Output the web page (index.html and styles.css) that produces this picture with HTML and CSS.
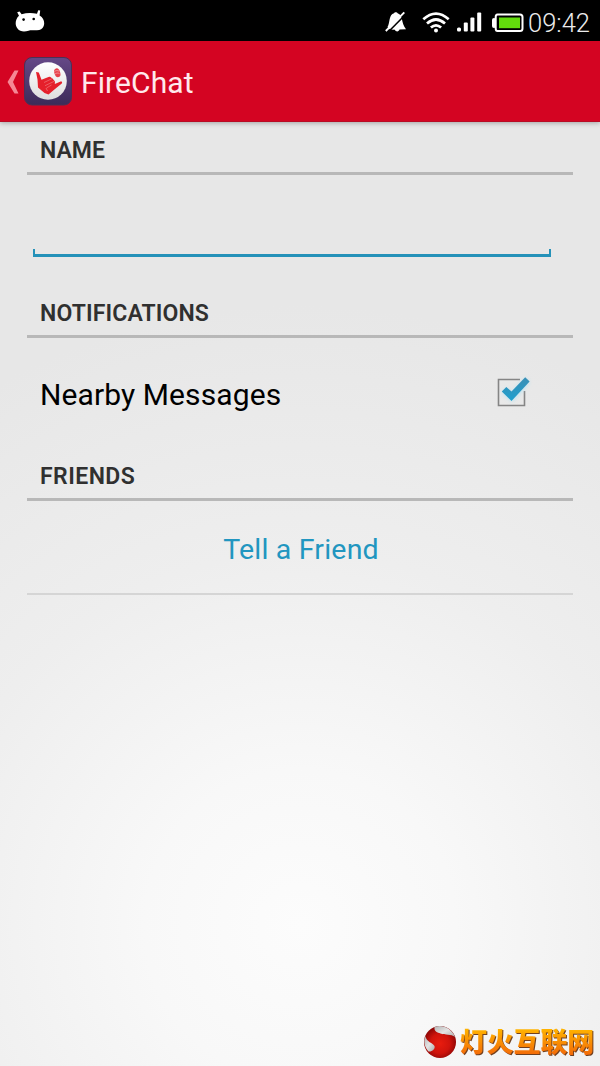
FILE: index.html
```html
<!DOCTYPE html>
<html lang="en">
<head>
<meta charset="utf-8">
<title>FireChat</title>
<link rel="stylesheet" href="styles.css">
</head>
<body>
<div class="screen">
  <header class="status">
    <svg class="droid" width="30" height="23" viewBox="0 0 30 23"><path d="M2.2 2.300 4.600 1.500l2 2.700Q14 2.200 22 3.800L23.200.2l2 .4-.6 5c4.400 2.600 5.400 7.200 4 10.600-1.200 3.200-4 4.400-8.100 4-3 .2-4.500-.4-7 .6-4 1.200-8.500 1.200-11-2.300C-.4 15.500.2 9 4 5.700Z" fill="#fff"/><circle cx="8.600" cy="9.600" r="1.300"/><circle cx="18.700" cy="9" r="1.300"/></svg>
    <div class="tray">
      <svg class="bell" width="22" height="22" viewBox="0 0 22 22"><path d="M2.500 16C5 12.500 3.800 3 9 2.300c.6-1.400 3-1.400 3.600 0C18.500 4 15.500 11 21 18.300l-6.500.3c-.5 2.400-4 2.400-4.600.1L5 18.500Z" fill="#fff"/><path d="M4 20.200 21 3" stroke="#000" stroke-width="1.600"/><path d="M.8 20 19.300 1.300" stroke="#fff" stroke-width="1.900"/></svg>
      <svg class="wifi" width="28" height="21" viewBox="0 0 28 21"><g fill="none" stroke="#fff" stroke-width="2.700"><path d="M1.300 7.300Q14-4 26.700 7.300"/><path d="M5 11.600Q14 3.400 23 11.600"/><path d="M8.900 15.600Q14 11 19.100 15.600"/></g><circle cx="14" cy="18.400" r="2" fill="#fff"/></svg>
      <svg class="signal" width="25" height="20" viewBox="0 0 25 20"><g fill="#fff"><rect y="15.500" width="4" height="4" rx="1.500"/><rect x="6.800" y="10.500" width="4" height="9" rx="1"/><rect x="13.400" y="5.500" width="4" height="14" rx="1"/><rect x="20.200" y=".5" width="4" height="19" rx="1"/></g></svg>
      <svg class="battery" width="32" height="20" viewBox="0 0 32 20"><path d="M5.500 1.500H28Q30.500 1.500 30.500 4V15.500Q30.500 18 28 18H5.500Q3.700 18 3.700 15.500V4Q3.700 1.500 5.500 1.500Z" fill="none" stroke="#fff" stroke-width="2"/><rect y="5" width="4" height="10" rx="2" fill="#fff"/><rect x="7" y="4.500" width="21" height="10.700" fill="#63dc0c"/></svg>
      <span class="clock">09:42</span>
    </div>
  </header>
  <div class="bar">
    <svg class="back" width="13" height="24" viewBox="0 0 13 24"><path d="M7.500.5h4L6 12l5.500 11.500h-4L.5 12Z" fill="#f58795"/></svg>
    <svg class="logo" width="49" height="49" viewBox="0 0 49 49">
      <defs><linearGradient id="tile" x2="0" y2="1"><stop stop-color="#654887"/><stop offset="1" stop-color="#3c2b59"/></linearGradient><linearGradient id="disc" x2="0" y2="1"><stop stop-color="#fff"/><stop offset="1" stop-color="#ddd"/></linearGradient></defs>
      <rect x=".5" y=".5" width="47" height="47.500" rx="7.500" fill="url(#tile)" stroke="#4b3156"/>
      <circle cx="24" cy="24" r="18.800" fill="url(#disc)"/>
      <path d="M12 15 14.800 15.400 17.500 22.800 24.500 19.900Q26.500 19.400 27 20.600L28.500 21.500 31 24.500 30.800 27 37.200 24.300Q38.800 25 37.800 26.600L31 32 24.500 37.500 20.500 36 14 30.500 13.500 22.500Z" fill="#e5202b"/>
      <g fill="none" stroke="#f08488" stroke-width=".6"><path d="M20 25.500l8-3.800M21 28.700l9.500-4.500M22.500 31l5-3M22 31l1.500 3"/></g>
      <ellipse cx="33.300" cy="15.800" rx="2.900" ry="4.500" transform="rotate(-18 33.300 15.800)" fill="#e5202b" opacity=".85"/>
      <path d="M30.500 14.500c1.600-1.200 3-1.200 4.700-.3M31 17c1.500-1.200 3-1.200 4.500-.4" fill="none" stroke="#fbdada" stroke-width=".5"/>
    </svg>
    <h1 class="title">FireChat</h1>
  </div>
  <main class="content">
    <section class="section">
      <h2 class="heading">NAME</h2>
      <div class="field"></div>
    </section>
    <section class="section">
      <h2 class="heading heading-notifications">NOTIFICATIONS</h2>
      <div class="option">
        <span class="label">Nearby Messages</span>
        <svg class="check" width="40" height="38" viewBox="0 0 40 38"><defs><filter id="glow" x="-30%" y="-30%" width="160%" height="160%"><feGaussianBlur stdDeviation="2.200"/></filter><linearGradient id="tick" x2="0" y2="1"><stop stop-color="#3a8fb5"/><stop offset="1" stop-color="#1f9fce"/></linearGradient></defs><path d="M28 5.500H6.500V31.500H32.500V17" fill="none" stroke="#858585" stroke-width="1.600"/><path d="M10.500 18.500 14.500 14.500 20 19.500 33 4.500 37 8 20 27Z" fill="#a5e0f5" filter="url(#glow)"/><path d="M9.800 17.500 14.300 13 19.500 17.500 33.200 3.200 37.600 7.500 19.500 27Z" fill="url(#tick)"/></svg>
      </div>
    </section>
    <section class="section">
      <h2 class="heading heading-friends">FRIENDS</h2>
      <div class="tell"><a class="link">Tell a Friend</a></div>
    </section>
  </main>
  <div class="mark">
    <svg class="orb" width="34" height="34" viewBox="0 0 34 34"><defs><radialGradient id="ball" cx=".5" cy=".55" r=".55"><stop stop-color="#e81c0e"/><stop offset=".55" stop-color="#d0140c"/><stop offset="1" stop-color="#860505"/></radialGradient><linearGradient id="steel" x2="1" y2="1"><stop stop-color="#b5b5b5"/><stop offset=".5" stop-color="#e4e4e4"/><stop offset="1" stop-color="#aaa"/></linearGradient></defs><circle cx="17" cy="17" r="16" fill="url(#ball)"/><path d="M11.500 2C20-1 29 4 32 12 28 8.500 22 10.500 17.500 8.500 14 7 11 6.500 11.500 2Z" fill="url(#steel)"/><path d="M2.200 11C.3 17 1.500 22 5.500 26.500 9 27 12.500 24 11.500 21 10 18 3.500 17 2.200 11Z" fill="url(#steel)"/></svg>
    <span class="mark-text">灯火互联网</span>
  </div>
</div>
</body>
</html>
```
FILE: styles.css
```css
body { margin: 0; }
.screen {
  position: relative;
  width: 600px;
  height: 1066px;
  overflow: hidden;
  font-family: Roboto, "Liberation Sans", sans-serif;
  background: radial-gradient(circle 620px at 300px 925px, #fcfcfc 0%, #f8f8f8 25%, #eeeeee 60%, #e7e7e7 100%);
}
.status {
  height: 41px;
  box-sizing: border-box;
  display: flex;
  justify-content: space-between;
  align-items: flex-start;
  padding: 10px 8px 0 15px;
  background: #000;
}
.tray { display: flex; align-items: flex-start; }
.bell { margin: 1px 15px 0 0; }
.wifi { margin: 2px 7px 0 0; }
.signal { margin: 2px 10px 0 0; }
.battery { margin: 3px 4px 0 0; }
.clock { font-size: 25.5px; line-height: 26px; color: #ececec; font-weight: 300; width: 64px; white-space: nowrap; }
.bar {
  height: 81px;
  box-sizing: border-box;
  display: flex;
  align-items: center;
  padding: 1px 0 0 7px;
  background: #d40422;
  border-bottom: 1px solid #b90b24;
  box-shadow: 0 1px 5px rgba(0, 0, 0, .3);
}
.back { margin-right: 4px; }
.title { margin: 2px 0 0 8px; font-size: 30px; line-height: 40px; font-weight: 400; letter-spacing: .1px; color: #ffe9ec; }
.content { padding: 12px 27px 0; }
.section { height: 163px; }
.heading {
  height: 41px;
  box-sizing: border-box;
  margin: 0;
  padding: 1px 0 0 13px;
  border-bottom: 3px solid #b8b8b8;
  font-size: 23px;
  line-height: 31px;
  font-weight: 600;
  color: #303030;
}
.heading-notifications { letter-spacing: .12px; }
.heading-friends { letter-spacing: .45px; }
.field {
  height: 8px;
  box-sizing: border-box;
  margin: 74px 22px 0 6px;
  border: 2px solid #2592b9;
  border-bottom-width: 3px;
  border-top: 0;
}
.option { display: flex; justify-content: space-between; align-items: flex-start; padding: 34px 41px 0 13px; }
.label { font-size: 30px; line-height: 46px; letter-spacing: .1px; color: #000; }
.check { margin-top: 2px; }
.tell { height: 94px; box-sizing: border-box; padding-left: 2px; border-bottom: 2px solid #d5d5d5; text-align: center; }
.link { font-size: 28.5px; line-height: 97px; letter-spacing: .2px; color: #2196c0; }
.mark { position: absolute; left: 423px; top: 1025px; display: flex; align-items: center; }
.mark-text {
  margin: -3px 0 0 3px;
  font: 900 27px/34px "Noto Sans CJK SC", sans-serif;
  letter-spacing: -.2px;
  white-space: nowrap;
  color: transparent;
  background: linear-gradient(#ffb300 15%, #f36b08 90%);
  background-clip: text;
  -webkit-background-clip: text;
  filter: drop-shadow(1px 1px 0 #704020);
}
```
